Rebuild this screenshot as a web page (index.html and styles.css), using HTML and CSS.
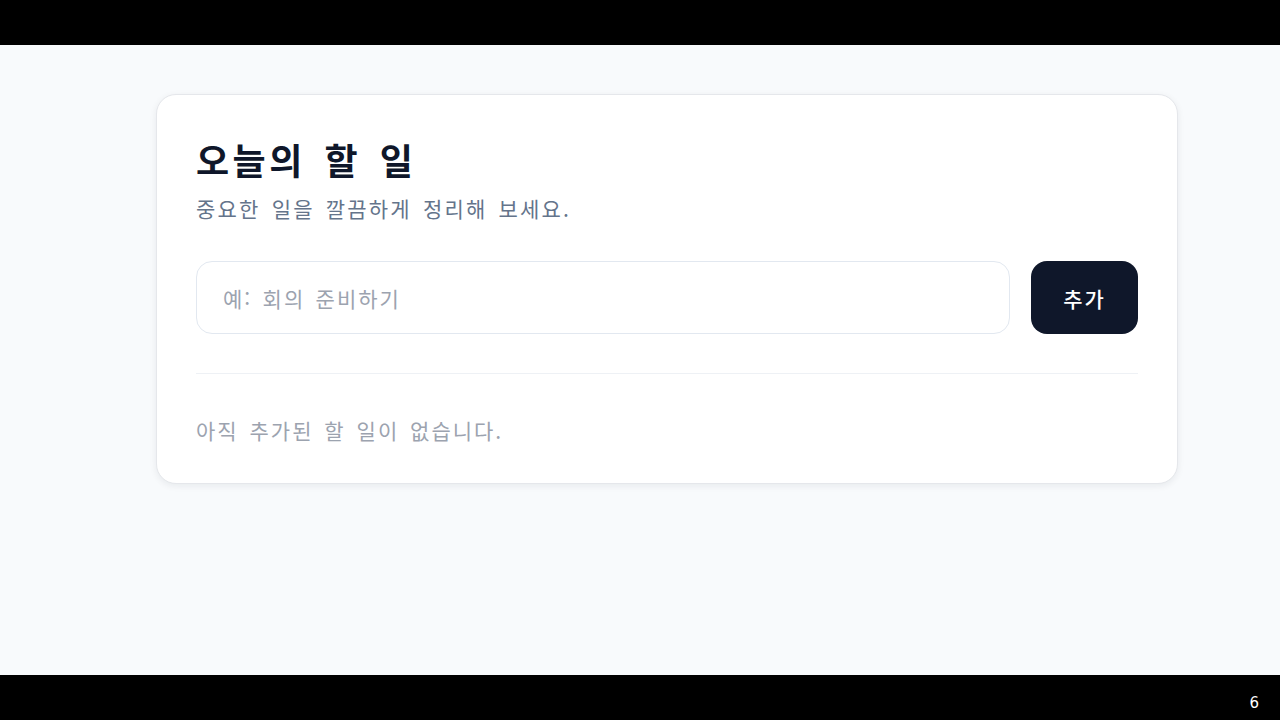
FILE: index.html
```html
<!DOCTYPE html>
<html lang="ko">
<head>
    <meta charset="UTF-8">
    <meta name="viewport" content="width=device-width, initial-scale=1.0">
    <title>오늘의 할 일</title>
    <link rel="stylesheet" href="styles.css">
</head>
<body>
    <div class="bar"></div>

    <main class="stage">
        <section class="card">
            <h1>오늘의 할 일</h1>
            <p class="subtitle">중요한 일을 깔끔하게 정리해 보세요.</p>

            <div class="add-row">
                <input type="text" id="todoInput" placeholder="예: 회의 준비하기">
                <button id="addBtn">추가</button>
            </div>

            <hr class="divider">

            <ul id="todoList" class="todo-list"></ul>
            <p class="empty" id="emptyMsg">아직 추가된 할 일이 없습니다.</p>
        </section>
    </main>

    <div class="bar bar-bottom"><span class="page-num">6</span></div>
</body>
</html>
```

FILE: styles.css
```css
* {
    box-sizing: border-box;
}
body {
    margin: 0;
    background: #000;
    font-family: "Noto Sans CJK KR", "Noto Sans", sans-serif;
}
.bar {
    height: 45px;
    background: #000;
}
.bar-bottom {
    display: flex;
    align-items: center;
    justify-content: flex-end;
    padding-right: 21px;
}
.page-num {
    color: #fff;
    font-family: "DejaVu Sans", sans-serif;
    font-size: 15px;
    padding-top: 10px;
}
.stage {
    height: 630px;
    background: #f8fafc;
    padding: 49px 0 0 156px;
}
.card {
    width: 1022px;
    background: #fff;
    border: 1px solid #e5e7eb;
    border-radius: 20px;
    box-shadow: 0 2px 7px rgba(15, 23, 42, 0.07);
    padding: 39px 39px 38px 39px;
}
h1 {
    margin: 0;
    font-size: 36px;
    line-height: 50px;
    font-weight: 700;
    color: #0f172a;
    letter-spacing: 3.5px;
    word-spacing: 5px;
}
.subtitle {
    margin: 9px 0 0;
    font-size: 21px;
    line-height: 30px;
    color: #64748b;
    letter-spacing: 2.2px;
    word-spacing: 3px;
}
.add-row {
    display: flex;
    gap: 21px;
    margin-top: 38px;
}
.add-row input {
    flex: 1;
    height: 73px;
    border: 1px solid #e2e8f0;
    border-radius: 16px;
    padding: 0 26px;
    font-family: inherit;
    font-size: 21px;
    color: #0f172a;
    outline: none;
}
.add-row input::placeholder {
    color: #9ca3af;
    letter-spacing: 2px;
    word-spacing: 2.5px;
}
.add-row button {
    width: 107px;
    height: 73px;
    border: none;
    border-radius: 16px;
    background: #0f172a;
    color: #fff;
    font-family: inherit;
    font-size: 21px;
    font-weight: 500;
    letter-spacing: 2px;
    cursor: pointer;
}
.divider {
    margin: 39px 0 0;
    border: none;
    border-top: 1px solid #eef1f5;
}
.todo-list {
    list-style: none;
    margin: 0;
    padding: 0;
}
.empty {
    margin: 41px 0 0;
    font-size: 21px;
    line-height: 30px;
    color: #9ca3af;
    letter-spacing: 2px;
    word-spacing: 3px;
}
```
